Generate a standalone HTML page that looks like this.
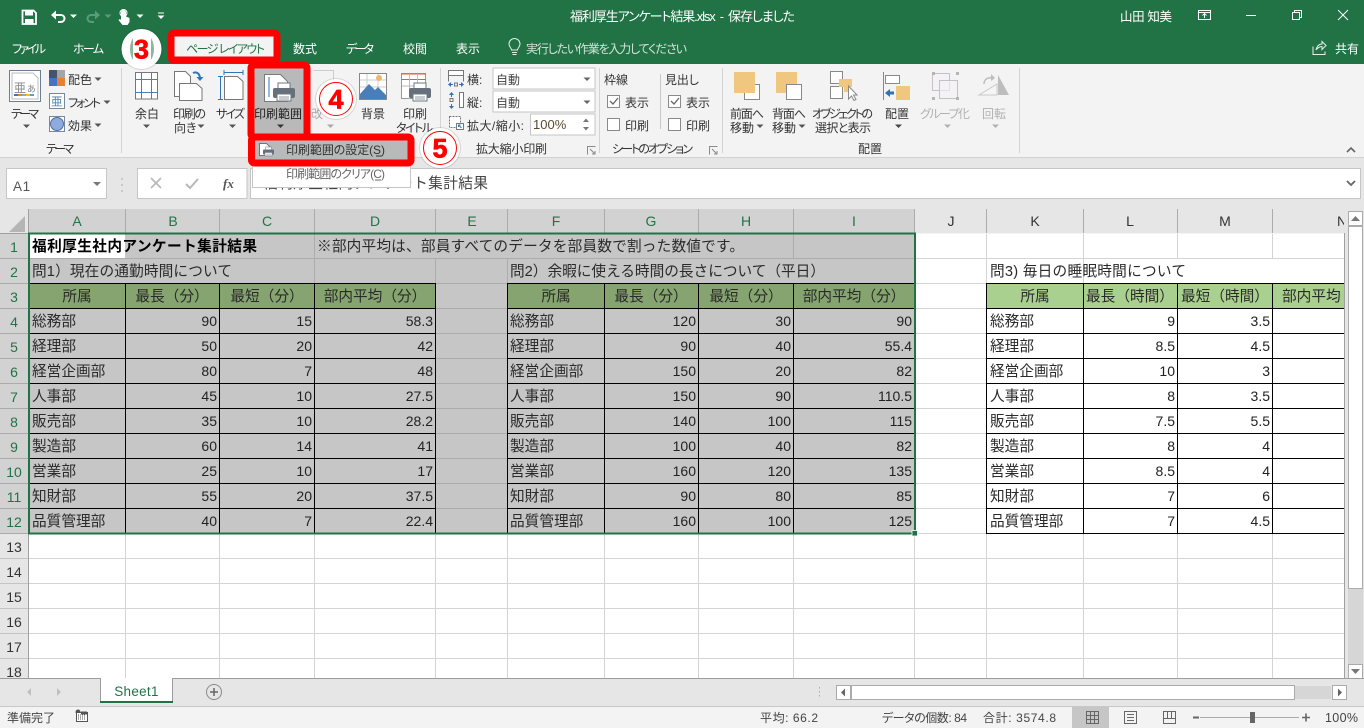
<!DOCTYPE html>
<html lang="ja"><head><meta charset="utf-8"><title>福利厚生アンケート結果.xlsx</title>
<style>
html,body{margin:0;padding:0;width:1364px;height:728px;overflow:hidden;background:#f3f3f3}
svg{display:block;font-family:"Liberation Sans","Noto Sans CJK JP",sans-serif;font-size:12px;font-feature-settings:"palt"}
.w{fill:#fff}.d{fill:#444}.g{fill:#b0b0b0}
.np{font-feature-settings:normal}
.c{font-size:14.67px;fill:#2a2a2a;font-feature-settings:normal}
.n{font-size:14px;fill:#222;text-anchor:end}
.m{text-anchor:middle}
.h{font-size:14px;text-anchor:middle;fill:#217346}
.h2{font-size:14px;text-anchor:middle;fill:#333}
</style></head><body>
<svg width="1364" height="728" viewBox="0 0 1364 728" xmlns="http://www.w3.org/2000/svg">
<defs>
<path id="ca" d="M-3.5-1.5h7L0 2z"/>
<clipPath id="gc"><rect x="28" y="209" width="1316" height="470"/></clipPath>
<g id="prn"><rect x="5" y="0" width="12" height="6" fill="#fff" stroke="#6d7782"/><rect x="0" y="5" width="22" height="10" rx="2" fill="#66707c"/><rect x="4" y="11" width="14" height="7" fill="#fff" stroke="#6d7782"/><path d="M6 14h10M6 16h10" stroke="#6d7782" stroke-width=".7"/></g>
<g id="lau"><path d="M-4.5 3.500V-4.500H3.500" fill="none" stroke="#8a8a8a"/><path d="M-2-2 3 3M3 0V3H0" fill="none" stroke="#8a8a8a"/></g>
</defs>

<!-- title bar -->
<rect width="1364" height="64" fill="#217346"/>
<path d="M22.500 10.500h11l2.500 2.500v11h-13.500z" fill="none" stroke="#fff" stroke-width="1.800"/><rect x="25" y="11" width="8" height="4.500" fill="#fff"/><rect x="25" y="19" width="8.500" height="5" fill="#fff"/>
<path d="M54 15h7a3.500 3.500 0 0 1 0 7h-3" fill="none" stroke="#fff" stroke-width="2"/><path d="M51 15l5-4.500v9z" class="w"/><use href="#ca" x="73.500" y="16" fill="#fff"/>
<path d="M98 15h-7a3.500 3.500 0 0 0 0 7h3" fill="none" stroke="#5d9a7b" stroke-width="2"/><path d="M100 15l-5-4.500v9z" fill="#5d9a7b"/><use href="#ca" x="108" y="16" fill="#5d9a7b"/>
<path d="M121 12.500a2.500 2.500 0 0 1 5 0v4l3.500 1.500v4l-2 3h-5l-4-5 1.500-1 1 1z" class="w"/><circle cx="123.500" cy="13" r="3.500" fill="none" stroke="#fff"/><use href="#ca" x="140" y="16" fill="#fff"/>
<path d="M158 13h6" stroke="#fff"/><use href="#ca" x="161" y="17" fill="#fff"/>
<text x="570" y="21" font-size="13" fill="#fff" textLength="225">福利厚生アンケート結果.xlsx&#160;&#160;-&#160;&#160;保存しました</text>
<text x="1120" y="21" font-size="12.500" fill="#fff" textLength="52">山田 知美</text>
<rect x="1198.500" y="10.500" width="12" height="9" fill="none" stroke="#fff"/><path d="M1198 12.500h13M1204.500 18v-4M1202.500 15.500l2-2 2 2" stroke="#fff" fill="none"/>
<path d="M1246 15.500h10" stroke="#fff"/>
<path d="M1292.500 12.500h7v7h-7zM1294.500 12.500v-2h7v7h-2" fill="none" stroke="#fff"/>
<path d="M1338 10l10 10M1348 10l-10 10" stroke="#fff" fill="none"/>
<g fill="#fff" font-size="12">
<text x="12" y="53" textLength="34">ファイル</text>
<text x="73" y="53" textLength="31">ホーム</text>
<text x="293" y="53">数式</text>
<text x="346" y="53" textLength="28">データ</text>
<text x="403" y="53">校閲</text>
<text x="456" y="53">表示</text>
<text x="526" y="53" textLength="161" fill="#d4e3da">実行したい作業を入力してください</text>
<text x="1335" y="53">共有</text>
</g>
<path d="M512 52.500h5M512.500 54.500h4M511.500 50c0-2-2.500-3-2.500-6a5.500 5.500 0 0 1 11 0c0 3-2.500 4-2.500 6z" fill="none" stroke="#e6efe9"/>
<path d="M1313 46.500v8h12v-3M1316 50c1-4 3-6 6-6v-2.500l4 4-4 4v-3c-2 0-4 1-6 3.500z" fill="none" stroke="#e6efe9"/>

<!-- ribbon -->
<rect y="64" width="1364" height="93" fill="#f3f3f3"/>
<rect y="157" width="1364" height="52" fill="#e6e6e6"/>
<path d="M0 157.500h1364" stroke="#d2d2d2"/>
<path d="M121.500 68v85M440.500 68v85M599.500 68v85M722.500 68v85M1019.500 68v85" stroke="#d4d4d4"/>
<path d="M660.500 74v55" stroke="#c8c8c8"/>

<!-- theme group -->
<rect x="9.500" y="70.500" width="31" height="31" fill="#fff" stroke="#6d7d92"/>
<path d="M12 73h21l5 5v21H12z" fill="#fff" stroke="#bbb"/>
<text x="14" y="92" font-size="12" fill="#888">亜</text><text x="27" y="92" font-size="9" fill="#888">あ</text>
<path d="M14 95h4" stroke="#4472c4" stroke-width="2"/><path d="M18 95h4" stroke="#ed7d31" stroke-width="2"/><path d="M22 95h4" stroke="#a5a5a5" stroke-width="2"/><path d="M26 95h4" stroke="#ffc000" stroke-width="2"/><path d="M30 95h4" stroke="#5b9bd5" stroke-width="2"/>
<g fill="#333">
<text x="11" y="118" textLength="28">テーマ</text>
<text x="68" y="84">配色</text>
<text x="68" y="107" textLength="33">フォント</text>
<text x="68" y="130">効果</text>
<text x="46" y="153" textLength="28">テーマ</text>
</g>
<use href="#ca" x="26.500" y="126" fill="#555"/><use href="#ca" x="98" y="79" fill="#555"/><use href="#ca" x="107" y="102" fill="#555"/><use href="#ca" x="98" y="125" fill="#555"/>
<rect x="49" y="70" width="8" height="8" fill="#44546a"/><rect x="57" y="70" width="8" height="8" fill="#a5a5a5"/><rect x="49" y="78" width="8" height="8" fill="#4472c4"/><rect x="57" y="78" width="8" height="8" fill="#ed7d31"/>
<rect x="49.500" y="93.500" width="15" height="15" fill="#fff" stroke="#7a8796"/><text x="51" y="105.500" font-size="11.500" fill="#4a7ebb">亜</text>
<rect x="49.500" y="116.500" width="15" height="15" fill="#fff" stroke="#7a8796"/><circle cx="57" cy="124" r="6.500" fill="#8faadc" stroke="#4a6ea8"/>

<!-- page setup group -->
<rect x="135.500" y="72.500" width="22" height="26.500" fill="#fff" stroke="#777"/><path d="M141.500 73v26M151.500 73v26M136 79.500h21M136 92.500h21" stroke="#4a7ebb"/>
<text x="135" y="118" fill="#333">余白</text><use href="#ca" x="146.500" y="126" fill="#555"/>
<path d="M174.500 71.500h11l5 5v20h-16z" fill="#fff" stroke="#777"/><path d="M179.500 83.500h17l5.500 5v12h-22.500z" fill="#fff" stroke="#777"/>
<path d="M193 73c4-2 7 1 7 6" fill="none" stroke="#2f75b5" stroke-width="2"/><path d="M196.500 77l3.500 4 3.500-4z" fill="#2f75b5"/>
<text x="173" y="118" fill="#333" textLength="33">印刷の</text><text x="174" y="132" fill="#333">向き</text><use href="#ca" x="201" y="126" fill="#555"/>
<path d="M220.500 76v24M218 76.500h5M218 99.500h5M224 72.500h19M224 70v5M243 70v5" stroke="#2f75b5" fill="none"/>
<path d="M224.500 76.500h13l5.500 5v18h-18.500z" fill="#fff" stroke="#777"/>
<text x="216" y="118" fill="#333" textLength="29">サイズ</text><use href="#ca" x="232.500" y="126" fill="#555"/>

<path d="M313.500 70.500h20v30" fill="none" stroke="#ccc"/><text x="311" y="118" fill="#aaa">改</text><use href="#ca" x="330.500" y="126" fill="#aaa"/>

<rect x="359.500" y="73.500" width="27" height="26" fill="#fff" stroke="#888"/><path d="M360 80h26M360 87h26M367 74v25M378 74v25" stroke="#ccc"/><circle cx="379" cy="78" r="3" fill="#efb868"/><path d="M360 99V94l9-10 6 6 3-3 8 8v4z" fill="#4a7ebb"/>
<text x="361" y="118" fill="#333">背景</text>

<rect x="401.500" y="73.500" width="24" height="25" fill="#fff" stroke="#999"/><path d="M401 74h25M401 79.500h25" stroke="#d9603b"/><path d="M409.500 74v25M417.500 74v25M402 86h24" stroke="#bbb"/>
<use href="#prn" x="409" y="83"/>
<text x="403" y="118" fill="#333">印刷</text><text x="396" y="132" fill="#333" textLength="37">タイトル</text>

<text x="247" y="153" fill="#333">ページ設定</text>

<!-- scale group -->
<path d="M448.500 70.500h15v5h-15zM448.500 75.500v6M463.500 75.500v6" fill="#fff" stroke="#777"/><path d="M449 84.500h4M459 84.500h4" stroke="#2f75b5"/><path d="M448 84.500l3-2.500v5zM464 84.500l-3-2.500v5z" fill="#2f75b5"/><rect x="454.500" y="83" width="3" height="3" fill="none" stroke="#777"/>
<path d="M459.500 92.500h4v15h-4z" fill="#fff" stroke="#777"/><path d="M451.500 93v4M451.500 104v4" stroke="#2f75b5"/><path d="M451.500 92l2.500 3h-5zM451.500 109l2.500-3h-5z" fill="#2f75b5"/><rect x="450" y="98.500" width="3" height="3" fill="none" stroke="#777"/>
<rect x="449.500" y="116.500" width="11" height="11" fill="#fff" stroke="#777" stroke-dasharray="2 1"/><rect x="456.500" y="123.500" width="7" height="6" fill="#fff" stroke="#777"/><path d="M458.500 125l3 3M458.500 127v-2h2" stroke="#2f75b5" fill="none"/>
<g fill="#333">
<text x="467" y="84">横:</text><text x="467" y="107">縦:</text>
<text x="467" y="130" textLength="57">拡大/縮小:</text>
<text x="476" y="153" textLength="71">拡大縮小印刷</text>
<text x="604" y="84">枠線</text>
<text x="625" y="107">表示</text><text x="625" y="130">印刷</text>
<text x="612" y="153" textLength="81">シートのオプション</text>
<text x="665" y="84" textLength="34">見出し</text>
<text x="686" y="107">表示</text><text x="686" y="130">印刷</text>
</g>
<rect x="493" y="68" width="102" height="21" fill="#fff" stroke="#c6c6c6"/><rect x="493" y="91" width="102" height="21" fill="#fff" stroke="#c6c6c6"/><rect x="530.500" y="114" width="64.500" height="21" fill="#fff" stroke="#c6c6c6"/>
<text x="496" y="84" fill="#444">自動</text><text x="496" y="107" fill="#444">自動</text><text x="533" y="129" font-size="13" fill="#5b4a30">100%</text>
<use href="#ca" x="587" y="79" fill="#666"/><use href="#ca" x="587" y="102" fill="#666"/><path d="M583 122h6l-3-3.500zM583 127h6l-3 3.500z" fill="#777"/>
<use href="#lau" x="592" y="151"/><use href="#lau" x="714" y="151"/>
<g fill="#fff" stroke="#8a8a8a"><rect x="607.500" y="95.500" width="12" height="12"/><rect x="607.500" y="118.500" width="12" height="12"/><rect x="668.500" y="95.500" width="12" height="12"/><rect x="668.500" y="118.500" width="12" height="12"/></g>
<path d="M610 101l3 3 5-6M671 101l3 3 5-6" fill="none" stroke="#666" stroke-width="1.300"/>

<!-- arrange group -->
<rect x="744.500" y="84.500" width="15" height="15" fill="#fff" stroke="#888"/><rect x="734" y="72" width="21" height="21" fill="#efc77f"/>
<rect x="776" y="72" width="21" height="21" fill="#efc77f"/><rect x="786.500" y="84.500" width="15" height="15" fill="#fff" stroke="#888"/>
<rect x="830.500" y="71.500" width="12" height="12" fill="#fff" stroke="#888"/><rect x="830.500" y="86.500" width="12" height="12" fill="#fff" stroke="#888"/><path d="M839 79h13v8h-4v5h-4v-5h-5z" fill="#efc77f"/><path d="M848.500 86v13l3-3 2.500 4.500 2-1-2.500-4.500h3.500z" fill="#fff" stroke="#888"/>
<path d="M883.500 72v28" stroke="#888"/><rect x="885.500" y="75.500" width="14" height="8" fill="#fff" stroke="#888"/><rect x="896" y="86" width="14" height="14" fill="#efc77f"/><path d="M885 93l5-4v2.500h4v3h-4v2.500z" fill="#2f75b5"/>
<rect x="932.500" y="73.500" width="17" height="17" fill="#f5f2f7" stroke="#c2c2c2"/><rect x="939.500" y="80.500" width="18" height="18" fill="#f5f2f7" fill-opacity=".6" stroke="#c2c2c2"/><g fill="#b5b5b5"><rect x="932" y="72" width="3" height="3"/><rect x="956" y="72" width="3" height="3"/><rect x="932" y="97" width="3" height="3"/><rect x="956" y="97" width="3" height="3"/></g>
<path d="M979 95l18-11v11z" fill="#f5f5f5" stroke="#c8c8c8"/><path d="M998 75l11 20h-11z" fill="#bdbdbd"/><path d="M984 84c0-5 4-7 9-6" fill="none" stroke="#bdbdbd" stroke-width="1.500"/><path d="M991 74l4 4-4 3z" fill="#bdbdbd"/>
<g fill="#333">
<text x="730" y="118" textLength="34">前面へ</text><text x="730" y="132">移動</text>
<text x="772" y="118" textLength="34">背面へ</text><text x="772" y="132">移動</text>
<text x="812" y="118" textLength="61">オブジェクトの</text><text x="815" y="132" textLength="56">選択と表示</text>
<text x="885" y="118">配置</text>
<text x="858" y="153">配置</text>
</g>
<g fill="#b1b1b1"><text x="920" y="118" textLength="50">グループ化</text><text x="982" y="118">回転</text></g>
<use href="#ca" x="760" y="126" fill="#555"/><use href="#ca" x="802" y="126" fill="#555"/><use href="#ca" x="898.500" y="126" fill="#444"/><use href="#ca" x="947.500" y="126" fill="#b1b1b1"/><use href="#ca" x="995.500" y="126" fill="#b1b1b1"/>
<path d="M1347 152l4-4 4 4" fill="none" stroke="#666" stroke-width="1.600"/>

<!-- formula bar -->
<rect x="6.500" y="168.500" width="100" height="30" fill="#fff" stroke="#c6c6c6"/>
<text x="13" y="191" font-size="13.500" fill="#555" letter-spacing=".6">A1</text><path d="M93 182h8l-4 4z" fill="#777"/>
<path d="M122 178v2M122 184v2M122 190v2" stroke="#aaa"/>
<rect x="137.500" y="168.500" width="109.500" height="30" fill="#fff" stroke="#c6c6c6"/>
<path d="M151 178l10 10M161 178l-10 10" stroke="#b8b8b8" stroke-width="1.600"/><path d="M186 184l4 4 8-9" fill="none" stroke="#b8b8b8" stroke-width="2"/>
<text x="223" y="188" font-family="Liberation Serif" font-style="italic" font-weight="bold" font-size="13" fill="#555">fx</text>
<rect x="250.500" y="168.500" width="1110" height="30" fill="#fff" stroke="#c6c6c6"/>
<text class="np" x="263" y="188" font-size="14.670" fill="#444" textLength="225">福利厚生社内アンケート集計結果</text>
<path d="M1347 181l4 4 4-4" fill="none" stroke="#666" stroke-width="1.800"/>

<!-- headers -->
<rect y="209" width="1345" height="24" fill="#e6e6e6"/>
<rect y="233" width="28" height="445" fill="#e6e6e6"/>
<path d="M9 232H25V216z" fill="#b5b5b5"/>
<rect x="28" y="209" width="887" height="24" fill="#d2d2d2"/>
<rect y="233" width="28" height="300" fill="#d2d2d2"/>
<path d="M125.500 209v24M219.500 209v24M314.500 209v24M435.500 209v24M507.500 209v24M604.500 209v24M698.500 209v24M793.500 209v24M914.500 209v24M986.500 209v24M1083.500 209v24M1177.500 209v24M1272.500 209v24" stroke="#ababab"/>
<path d="M28.500 209v469" stroke="#a0a0a0"/><path d="M0 233.500h28" stroke="#a0a0a0"/>
<path d="M0 258.500h28M0 283.500h28M0 308.500h28M0 333.500h28M0 358.500h28M0 383.500h28M0 408.500h28M0 433.500h28M0 458.500h28M0 483.500h28M0 508.500h28M0 533.500h28" stroke="#ababab"/>
<path d="M0 558.500h28M0 583.500h28M0 608.500h28M0 633.500h28M0 658.500h28" stroke="#c4c4c4"/>
<g class="hh">
<text class="h" x="77" y="226">A</text><text class="h" x="173" y="226">B</text><text class="h" x="267" y="226">C</text><text class="h" x="375" y="226">D</text><text class="h" x="472" y="226">E</text><text class="h" x="556" y="226">F</text><text class="h" x="651" y="226">G</text><text class="h" x="746" y="226">H</text><text class="h" x="854" y="226">I</text>
<text class="h2" x="951" y="226">J</text><text class="h2" x="1035" y="226">K</text><text class="h2" x="1130" y="226">L</text><text class="h2" x="1225" y="226">M</text>
<text class="h" x="14" y="252">1</text><text class="h" x="14" y="277">2</text><text class="h" x="14" y="302">3</text><text class="h" x="14" y="327">4</text><text class="h" x="14" y="352">5</text><text class="h" x="14" y="377">6</text><text class="h" x="14" y="402">7</text><text class="h" x="14" y="427">8</text><text class="h" x="14" y="452">9</text><text class="h" x="14" y="477">10</text><text class="h" x="14" y="502">11</text><text class="h" x="14" y="527">12</text>
<text class="h2" x="14" y="552">13</text><text class="h2" x="14" y="577">14</text><text class="h2" x="14" y="602">15</text><text class="h2" x="14" y="627">16</text><text class="h2" x="14" y="652">17</text><text class="h2" x="14" y="677">18</text>
</g>
<text class="h2" x="1342" y="226" clip-path="url(#gc)">N</text>

<!-- sheet -->
<rect x="29" y="234" width="1316" height="444" fill="#fff"/>
<path d="M29 258.500H1345M29 283.500H1345M29 308.500H1345M29 333.500H1345M29 358.500H1345M29 383.500H1345M29 408.500H1345M29 433.500H1345M29 458.500H1345M29 483.500H1345M29 508.500H1345M29 533.500H1345M29 558.500H1345M29 583.500H1345M29 608.500H1345M29 633.500H1345M29 658.500H1345" stroke="#d4d4d4"/>
<path d="M125.500 234V678M219.500 234V678M314.500 234V678M435.500 234V678M507.500 234V678M604.500 234V678M698.500 234V678M793.500 234V678M914.500 234V678M986.500 234V678M1083.500 234V678M1177.500 234V678M1272.500 234V678" stroke="#d4d4d4"/>
<!-- selection -->
<rect x="29" y="234" width="886" height="300" fill="#c6c6c6"/>
<path d="M29 258.500H915M29 283.500H915M29 308.500H915M29 333.500H915M29 358.500H915M29 383.500H915M29 408.500H915M29 433.500H915M29 458.500H915M29 483.500H915M29 508.500H915" stroke="#acacac"/>
<path d="M314.500 234V283M793.500 234V258M435.500 258V534M507.500 258V283" stroke="#acacac"/>
<rect x="30" y="234" width="95" height="24" fill="#fff"/>
<rect x="1084" y="259" width="260" height="24" fill="#fff"/>
<!-- header fills -->
<rect x="30" y="284" width="405" height="24" fill="#85a46f"/><rect x="508" y="284" width="406" height="24" fill="#85a46f"/><rect x="987" y="284" width="357" height="24" fill="#a9d08e"/>
<!-- black borders -->
<path d="M30 283.500H436M30 308.500H436M30 333.500H436M30 358.500H436M30 383.500H436M30 408.500H436M30 433.500H436M30 458.500H436M30 483.500H436M30 508.500H436M125.500 283V533M219.500 283V533M314.500 283V533M435.500 283V533" stroke="#000"/>
<path d="M507 283.500H914M507 308.500H914M507 333.500H914M507 358.500H914M507 383.500H914M507 408.500H914M507 433.500H914M507 458.500H914M507 483.500H914M507 508.500H914M507.500 283V533M604.500 283V533M698.500 283V533M793.500 283V533" stroke="#000"/>
<path d="M986 283.500H1344M986 308.500H1344M986 333.500H1344M986 358.500H1344M986 383.500H1344M986 408.500H1344M986 433.500H1344M986 458.500H1344M986 483.500H1344M986 508.500H1344M986 533.500H1344M986.500 283V534M1083.500 283V534M1177.500 283V534M1272.500 283V534" stroke="#000"/>
<!-- sheet text -->
<text class="np" x="32" y="251" font-size="14.670" font-weight="bold" fill="#000" textLength="225">福利厚生社内アンケート集計結果</text>
<text class="c" x="317" y="251" textLength="427">※部内平均は、部員すべてのデータを部員数で割った数値です。</text>
<text class="c" x="32" y="276" textLength="200">問1）現在の通勤時間について</text>
<text class="c" x="510" y="276" textLength="315">問2）余暇に使える時間の長さについて（平日）</text>
<text class="c" x="990" y="276" textLength="196">問3) 毎日の睡眠時間について</text>
<g class="c m" text-anchor="middle">
<text x="77" y="301">所属</text><text x="172" y="301">最長（分）</text><text x="267" y="301">最短（分）</text><text x="375" y="301">部内平均（分）</text>
<text x="556" y="301">所属</text><text x="651" y="301">最長（分）</text><text x="746" y="301">最短（分）</text><text x="854" y="301">部内平均（分）</text>
<text x="1035" y="301">所属</text><text x="1130" y="301">最長（時間）</text><text x="1225" y="301">最短（時間）</text>
</g>
<text class="c" x="1282" y="301" clip-path="url(#gc)">部内平均（分）</text>
<g class="c">
<text x="32" y="326">総務部</text><text x="32" y="351">経理部</text><text x="32" y="376">経営企画部</text><text x="32" y="401">人事部</text><text x="32" y="426">販売部</text><text x="32" y="451">製造部</text><text x="32" y="476">営業部</text><text x="32" y="501">知財部</text><text x="32" y="526">品質管理部</text>
<text x="510" y="326">総務部</text><text x="510" y="351">経理部</text><text x="510" y="376">経営企画部</text><text x="510" y="401">人事部</text><text x="510" y="426">販売部</text><text x="510" y="451">製造部</text><text x="510" y="476">営業部</text><text x="510" y="501">知財部</text><text x="510" y="526">品質管理部</text>
<text x="990" y="326">総務部</text><text x="990" y="351">経理部</text><text x="990" y="376">経営企画部</text><text x="990" y="401">人事部</text><text x="990" y="426">販売部</text><text x="990" y="451">製造部</text><text x="990" y="476">営業部</text><text x="990" y="501">知財部</text><text x="990" y="526">品質管理部</text>
</g>
<text class="n" x="217" y="326">90</text><text class="n" x="217" y="351">50</text><text class="n" x="217" y="376">80</text><text class="n" x="217" y="401">45</text><text class="n" x="217" y="426">35</text><text class="n" x="217" y="451">60</text><text class="n" x="217" y="476">25</text><text class="n" x="217" y="501">55</text><text class="n" x="217" y="526">40</text>
<text class="n" x="312" y="326">15</text><text class="n" x="312" y="351">20</text><text class="n" x="312" y="376">7</text><text class="n" x="312" y="401">10</text><text class="n" x="312" y="426">10</text><text class="n" x="312" y="451">14</text><text class="n" x="312" y="476">10</text><text class="n" x="312" y="501">20</text><text class="n" x="312" y="526">7</text>
<text class="n" x="433" y="326">58.3</text><text class="n" x="433" y="351">42</text><text class="n" x="433" y="376">48</text><text class="n" x="433" y="401">27.5</text><text class="n" x="433" y="426">28.2</text><text class="n" x="433" y="451">41</text><text class="n" x="433" y="476">17</text><text class="n" x="433" y="501">37.5</text><text class="n" x="433" y="526">22.4</text>
<text class="n" x="696" y="326">120</text><text class="n" x="696" y="351">90</text><text class="n" x="696" y="376">150</text><text class="n" x="696" y="401">150</text><text class="n" x="696" y="426">140</text><text class="n" x="696" y="451">100</text><text class="n" x="696" y="476">160</text><text class="n" x="696" y="501">90</text><text class="n" x="696" y="526">160</text>
<text class="n" x="791" y="326">30</text><text class="n" x="791" y="351">40</text><text class="n" x="791" y="376">20</text><text class="n" x="791" y="401">90</text><text class="n" x="791" y="426">100</text><text class="n" x="791" y="451">40</text><text class="n" x="791" y="476">120</text><text class="n" x="791" y="501">80</text><text class="n" x="791" y="526">100</text>
<text class="n" x="912" y="326">90</text><text class="n" x="912" y="351">55.4</text><text class="n" x="912" y="376">82</text><text class="n" x="912" y="401">110.5</text><text class="n" x="912" y="426">115</text><text class="n" x="912" y="451">82</text><text class="n" x="912" y="476">135</text><text class="n" x="912" y="501">85</text><text class="n" x="912" y="526">125</text>
<text class="n" x="1175" y="326">9</text><text class="n" x="1175" y="351">8.5</text><text class="n" x="1175" y="376">10</text><text class="n" x="1175" y="401">8</text><text class="n" x="1175" y="426">7.5</text><text class="n" x="1175" y="451">8</text><text class="n" x="1175" y="476">8.5</text><text class="n" x="1175" y="501">7</text><text class="n" x="1175" y="526">7</text>
<text class="n" x="1270" y="326">3.5</text><text class="n" x="1270" y="351">4.5</text><text class="n" x="1270" y="376">3</text><text class="n" x="1270" y="401">3.5</text><text class="n" x="1270" y="426">5.5</text><text class="n" x="1270" y="451">4</text><text class="n" x="1270" y="476">4</text><text class="n" x="1270" y="501">6</text><text class="n" x="1270" y="526">4.5</text>
<!-- selection border -->
<rect x="29" y="233.500" width="886" height="300" fill="none" stroke="#217346" stroke-width="2"/>
<rect x="912" y="530.500" width="5.500" height="5.500" fill="#217346" stroke="#fff" stroke-width=".8"/>
<path d="M1344.500 233v445" stroke="#a0a0a0"/>

<!-- vertical scrollbar -->
<rect x="1345" y="209" width="19" height="469" fill="#e6e6e6"/>
<rect x="1348" y="226" width="15" height="439" fill="#d6d6d6"/>
<rect x="1348.500" y="211.500" width="14" height="14" fill="#fff" stroke="#ababab"/><path d="M1351 221h9l-4.500-5z" fill="#777"/>
<rect x="1348.500" y="226.500" width="14" height="362" fill="#fff" stroke="#ababab"/>
<rect x="1348.500" y="664.500" width="14" height="14" fill="#fff" stroke="#ababab"/><path d="M1351 669h9l-4.500 5z" fill="#777"/>

<!-- tab bar -->
<rect y="678" width="1364" height="28" fill="#e6e6e6"/>
<path d="M0 678.500H1364" stroke="#9c9c9c"/>
<path d="M0 706.500H1364" stroke="#c8c8c8"/>
<path d="M100.500 678v25M172.500 678v25" stroke="#9c9c9c"/>
<rect x="101" y="678" width="71" height="24" fill="#fff"/><rect x="100" y="701" width="73" height="2" fill="#217346"/>
<text x="136.500" y="696" font-size="13.500" text-anchor="middle" fill="#217346" letter-spacing=".3">Sheet1</text>
<path d="M31 688l-4 4 4 4zM57 688l4 4-4 4z" fill="#c0c0c0"/>
<circle cx="214" cy="692" r="7.500" fill="none" stroke="#8a8a8a"/><path d="M210 692h8M214 688v8" stroke="#666" stroke-width="1.500"/>
<path d="M819.500 687v1.500M819.500 691v1.500M819.500 695v1.500" stroke="#aaa"/>
<rect x="836.500" y="685.500" width="14" height="14" fill="#fff" stroke="#ababab"/><path d="M845 688.500l-4 4 4 4z" fill="#666"/>
<rect x="851.500" y="685.500" width="443" height="14" fill="#fff" stroke="#ababab"/>
<rect x="1295" y="686" width="36" height="13" fill="#d6d6d6"/>
<rect x="1332.500" y="685.500" width="14" height="14" fill="#fff" stroke="#ababab"/><path d="M1338 688.500l4 4-4 4z" fill="#666"/>

<!-- status bar -->
<rect y="707" width="1364" height="21" fill="#f3f3f3"/>
<g fill="#444">
<text x="7" y="722">準備完了</text>
<text x="760" y="722" textLength="58">平均: 66.2</text>
<text x="882" y="722" textLength="85">データの個数: 84</text>
<text x="983" y="722" textLength="73">合計: 3574.8</text>
<text x="1325" y="722" font-size="12.500" textLength="33">100%</text>
</g>
<circle cx="78" cy="712" r="2.500" fill="#555"/><rect x="76.500" y="712.500" width="11" height="9" fill="#fff" stroke="#555"/><path d="M78 715h8M78 717h8M78 719h8" stroke="#555" stroke-dasharray="1 1"/><path d="M81 711.500h6v3h-6z" fill="#555"/>
<rect x="1072" y="707" width="37" height="21" fill="#c6c6c6"/>
<path d="M1086.500 711.500h12v12h-12zM1090.500 712v11M1094.500 712v11M1087 715.500h11M1087 719.500h11" fill="none" stroke="#666"/>
<path d="M1124.500 711.500h12v12h-12z" fill="none" stroke="#666"/><path d="M1127 714.500h7M1127 717.500h7M1127 720.500h7" stroke="#666"/>
<path d="M1163.500 711.500h12v12h-12zM1167.500 712v6M1171.500 712v6M1164 718.500h11" fill="none" stroke="#666"/>
<path d="M1193 717.500h6" stroke="#666" stroke-width="2"/>
<path d="M1200 717.500h99" stroke="#aaa"/>
<rect x="1250" y="712" width="5" height="11" fill="#666"/>
<path d="M1302 717.500h8M1306 713.500v8" stroke="#666" stroke-width="1.600"/>

<!-- red highlights, menu -->
<rect x="252.500" y="134.500" width="158" height="53" fill="#fff" stroke="#c6c6c6"/>
<rect x="251" y="65" width="56" height="72" rx="3" fill="#b9b9b9" stroke="#f00" stroke-width="7"/>
<rect x="251.500" y="137" width="159.500" height="26" rx="3" fill="#b9b9b9" stroke="#f00" stroke-width="7"/>
<path d="M264.500 74.500h16l7 7v20h-23z" fill="#fff" stroke="#7a7a7a"/><path d="M269 77v20" stroke="#2f75b5"/>
<use href="#prn" x="273" y="83"/>
<text x="254" y="118" fill="#222" textLength="48">印刷範囲</text><use href="#ca" x="280.500" y="126" fill="#333"/>
<path d="M259.500 143.500h7l3 3v9h-10z" fill="#fff" stroke="#6d7782"/>
<use href="#prn" transform="translate(263 147) scale(.5)"/>
<text x="286" y="154" fill="#333" textLength="99">印刷範囲の設定(S)</text>
<text x="286" y="178" fill="#666" textLength="99">印刷範囲のクリア(C)</text>
<path d="M376 156h6" stroke="#333"/><path d="M375 180h6" stroke="#666"/>

<!-- callouts -->
<g>
<circle cx="141.500" cy="49" r="21" fill="#000" fill-opacity=".12"/><circle cx="141.500" cy="49" r="20" fill="#fff"/>
<path d="M133 38c-4 6-4 16 0 22zM151 38c4 6 4 16 0 22z" fill="#2f7a52" opacity=".55"/>
<text x="141.500" y="58.500" font-size="27" font-weight="bold" fill="#f00" stroke="#f00" stroke-width=".7" text-anchor="middle">3</text>
<circle cx="336" cy="99" r="21" fill="#000" fill-opacity=".12"/><circle cx="336" cy="99" r="20" fill="#fff"/><circle cx="336" cy="99" r="16.500" fill="none" stroke="#f00"/>
<text x="336" y="108.500" font-size="27" font-weight="bold" fill="#f00" stroke="#f00" stroke-width=".7" text-anchor="middle">4</text>
<circle cx="440" cy="148" r="21" fill="#000" fill-opacity=".12"/><circle cx="440" cy="148" r="20" fill="#fff"/><circle cx="440" cy="148" r="16.500" fill="none" stroke="#f00"/>
<text x="440" y="157.500" font-size="27" font-weight="bold" fill="#f00" stroke="#f00" stroke-width=".7" text-anchor="middle">5</text>
</g>
<rect x="171" y="33" width="106" height="27" rx="3" fill="#f3f3f3" stroke="#f00" stroke-width="7"/>
<text x="186" y="53" font-size="12" fill="#217346" textLength="79">ページ レイアウト</text>
</svg>
</body></html>
